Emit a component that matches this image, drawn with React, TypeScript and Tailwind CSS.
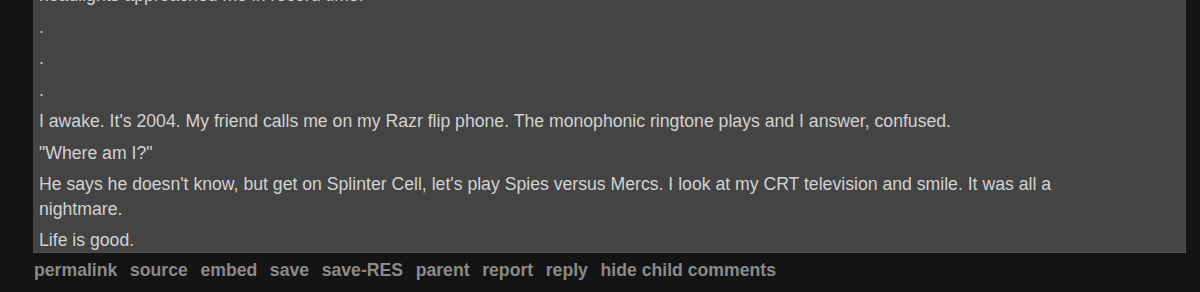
const paragraphs = [
  "headlights approached me in record time.",
  ".",
  ".",
  ".",
  "I awake. It's 2004. My friend calls me on my Razr flip phone. The monophonic ringtone plays and I answer, confused.",
  "\"Where am I?\"",
  "He says he doesn't know, but get on Splinter Cell, let's play Spies versus Mercs. I look at my CRT television and smile. It was all a nightmare.",
  "Life is good.",
];

const buttons = [
  "permalink",
  "source",
  "embed",
  "save",
  "save-RES",
  "parent",
  "report",
  "reply",
  "hide child comments",
];

export default function App() {
  return (
    <div
      className="h-[292px] overflow-hidden bg-[#141414] pl-[33px] pr-[14px]"
      style={{ fontFamily: '"Liberation Sans", Arial, sans-serif' }}
    >
      <div className="-mt-[17px] border-r border-b border-[#4f4f4f] bg-[#444444] pl-[6px] pr-[60px] text-[17.65px] leading-[24.5px] text-[#d2d2d2]">
        {paragraphs.map((p, i) => (
          <p key={i} className={i === paragraphs.length - 1 ? "-mb-px" : "mb-[7px]"}>
            {p}
          </p>
        ))}
      </div>
      <ul className="mt-[6px] flex gap-[12.6px] pl-px text-[17.65px] font-bold leading-[22px] text-[#8a8a8a]">
        {buttons.map((b) => (
          <li key={b}>
            <a className="cursor-pointer hover:underline">{b}</a>
          </li>
        ))}
      </ul>
    </div>
  );
}
